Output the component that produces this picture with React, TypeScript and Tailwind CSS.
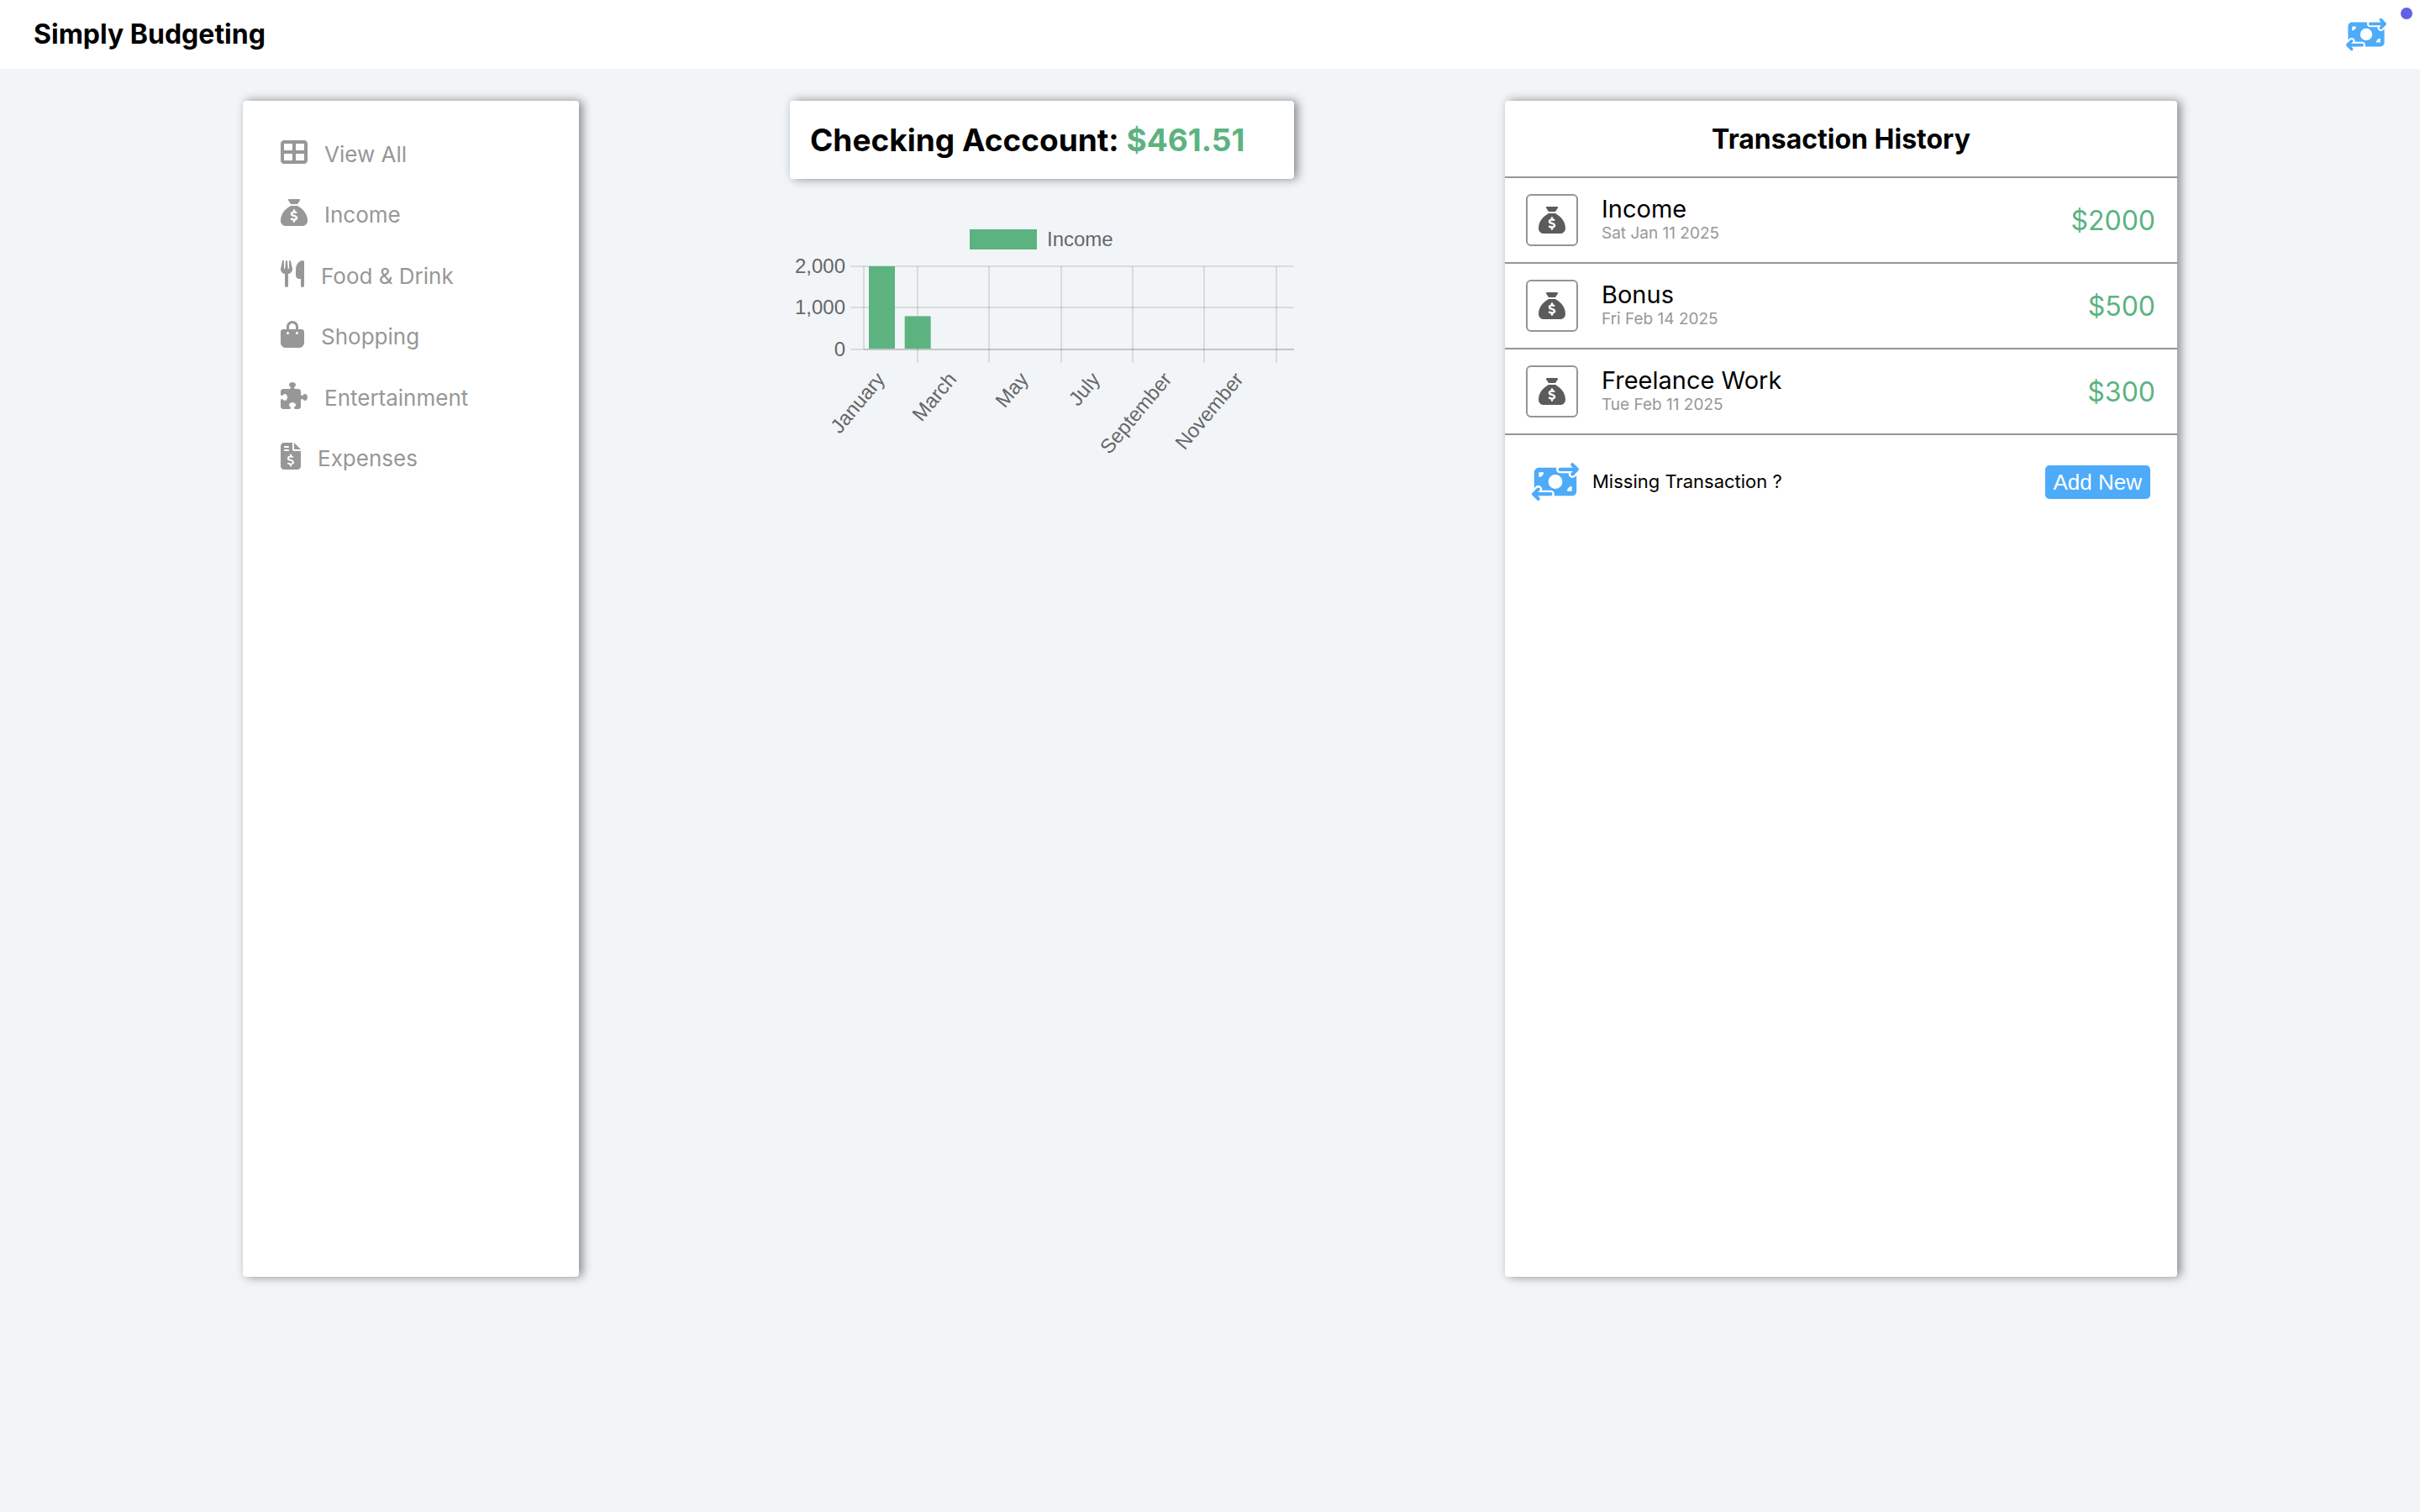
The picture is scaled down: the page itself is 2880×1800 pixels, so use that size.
import type { IconType } from "react-icons";
import {
  FaBagShopping,
  FaFileInvoiceDollar,
  FaMoneyBillTransfer,
  FaPuzzlePiece,
  FaSackDollar,
  FaTableCellsLarge,
  FaUtensils,
} from "react-icons/fa6";

const categories: { label: string; icon: IconType; width: string }[] = [
  { label: "View All", icon: FaTableCellsLarge, width: "w-8" },
  { label: "Income", icon: FaSackDollar, width: "w-8" },
  { label: "Food & Drink", icon: FaUtensils, width: "w-7" },
  { label: "Shopping", icon: FaBagShopping, width: "w-7" },
  { label: "Entertainment", icon: FaPuzzlePiece, width: "w-8" },
  { label: "Expenses", icon: FaFileInvoiceDollar, width: "w-6" },
];

const transactions = [
  { title: "Income", date: "Sat Jan 11 2025", amount: "$2000" },
  { title: "Bonus", date: "Fri Feb 14 2025", amount: "$500" },
  { title: "Freelance Work", date: "Tue Feb 11 2025", amount: "$300" },
];

const card = "rounded bg-white shadow-[4px_0px_12px_rgba(0,0,0,0.45)]";

function Header() {
  return (
    <header className="relative flex h-[82px] items-center justify-between bg-white px-10">
      <h1 className="text-[32px] leading-10 font-bold">Simply Budgeting</h1>
      <button type="button" aria-label="Add transaction" className="text-[#4dabf9]">
        <FaMoneyBillTransfer className="h-10 w-12" />
      </button>
      <span className="absolute top-[9px] right-[9px] size-[14px] rounded-full bg-[#6560e8]" />
    </header>
  );
}

function Sidebar() {
  return (
    <nav className={`w-[400px] pt-[45px] pl-[45px] ${card}`}>
      <ul className="flex h-[434px] flex-col justify-between">
        {categories.map(({ label, icon: Icon, width }) => (
          <li key={label} className="h-[72px]">
            <button type="button" className="text-[26px] leading-8 text-[#979797]">
              <Icon className={`mr-5 inline-block h-8 align-[-4px] ${width}`} />
              {label}
            </button>
          </li>
        ))}
      </ul>
    </nav>
  );
}

const months = ["January", "March", "May", "July", "September", "November"];
const totals = [2000, 800];
const axisLeft = 88;
const axisTop = 57;
const axisBottom = 156;
const step = 128 / 3;

function IncomeChart() {
  return (
    <svg
      viewBox="0 0 600 300"
      role="img"
      aria-label="Income by month"
      className="mt-[47px] w-full font-['Liberation_Sans',Arial,sans-serif] text-[24px]"
    >
      <rect x="214" y="13" width="80" height="24" fill="#5cb380" />
      <text x="306" y="33" fill="#666">Income</text>
      {["2,000", "1,000", "0"].map((label, i) => {
        const y = Math.floor(axisTop + (i * (axisBottom - axisTop)) / 2);
        return (
          <g key={label}>
            <path d={`M72 ${y}H600`} stroke="#000" strokeOpacity="0.1" strokeWidth="2" />
            <text x="66" y={y + 8} textAnchor="end" fill="#666">{label}</text>
          </g>
        );
      })}
      <path d={`M${axisLeft} ${axisTop}V${axisBottom}`} stroke="#000" strokeOpacity="0.1" strokeWidth="2" />
      {months.map((month, i) => (
        <path
          key={month}
          d={`M${Math.round(axisLeft + step * (1.5 + 2 * i))} ${axisTop}V172`}
          stroke="#000"
          strokeOpacity="0.1"
          strokeWidth="2"
        />
      ))}
      <path d={`M${axisLeft} ${axisBottom}H600`} stroke="#000" strokeOpacity="0.1" strokeWidth="2" />
      {totals.map((total, i) => {
        const h = (total / 2000) * (axisBottom - axisTop);
        return <rect key={total} x={94 + step * i} y={axisBottom - h} width="31" height={h - 1} fill="#5cb380" />;
      })}
      {months.map((month, i) => (
        <text
          key={month}
          textAnchor="end"
          fill="#666"
          transform={`translate(${axisLeft + step * (0.5 + 2 * i) + 5} 192) rotate(-50)`}
        >
          {month}
        </text>
      ))}
    </svg>
  );
}

function Overview() {
  return (
    <section className="w-[600px]">
      <h2 className={`px-6 py-6 text-[37px] leading-[45px] font-bold ${card}`}>
        Checking Acccount: <span className="text-[#5cb380]">$461.51</span>
      </h2>
      <IncomeChart />
    </section>
  );
}

function History() {
  return (
    <section className={`w-[800px] ${card}`}>
      <h2 className="border-b-2 border-[#959595] pt-[26px] pb-6 text-center text-[32px] leading-10 font-bold">
        Transaction History
      </h2>
      <ul>
        {transactions.map(({ title, date, amount }) => (
          <li key={title} className="flex h-[102px] items-center border-b-2 border-[#959595] pr-[26px] pl-[25px]">
            <span className="grid size-[62px] place-items-center rounded-md border-2 border-[#959595] text-[#5b5b5b]">
              <FaSackDollar className="size-8" />
            </span>
            <div className="ml-7 flex-1 pb-[3px]">
              <p className="text-[29px] leading-[35px]">{title}</p>
              <p className="text-[19px] leading-6 text-[#979797]">{date}</p>
            </div>
            <span className="pt-0.5 text-[32px]/10 text-[#5cb380]">{amount}</span>
          </li>
        ))}
      </ul>
      <div className="flex items-center pt-[33px] pr-8 pl-8">
        <FaMoneyBillTransfer className="h-[45px] w-14 text-[#4dabf9]" />
        <p className="ml-4 flex-1 text-[22px]">Missing Transaction ?</p>
        <button
          type="button"
          className="h-10 rounded-[5px] bg-[#4dabf9] px-[10px] font-['Liberation_Sans',Arial,sans-serif] text-[26px] leading-10 text-white"
        >
          Add New
        </button>
      </div>
    </section>
  );
}

export default function App() {
  return (
    <div className="min-h-screen bg-[#f1f5f8] font-[Inter,sans-serif] text-black">
      <Header />
      <main className="mx-auto mt-[38px] flex min-h-[1400px] w-4/5 justify-between px-px">
        <Sidebar />
        <Overview />
        <History />
      </main>
    </div>
  );
}
